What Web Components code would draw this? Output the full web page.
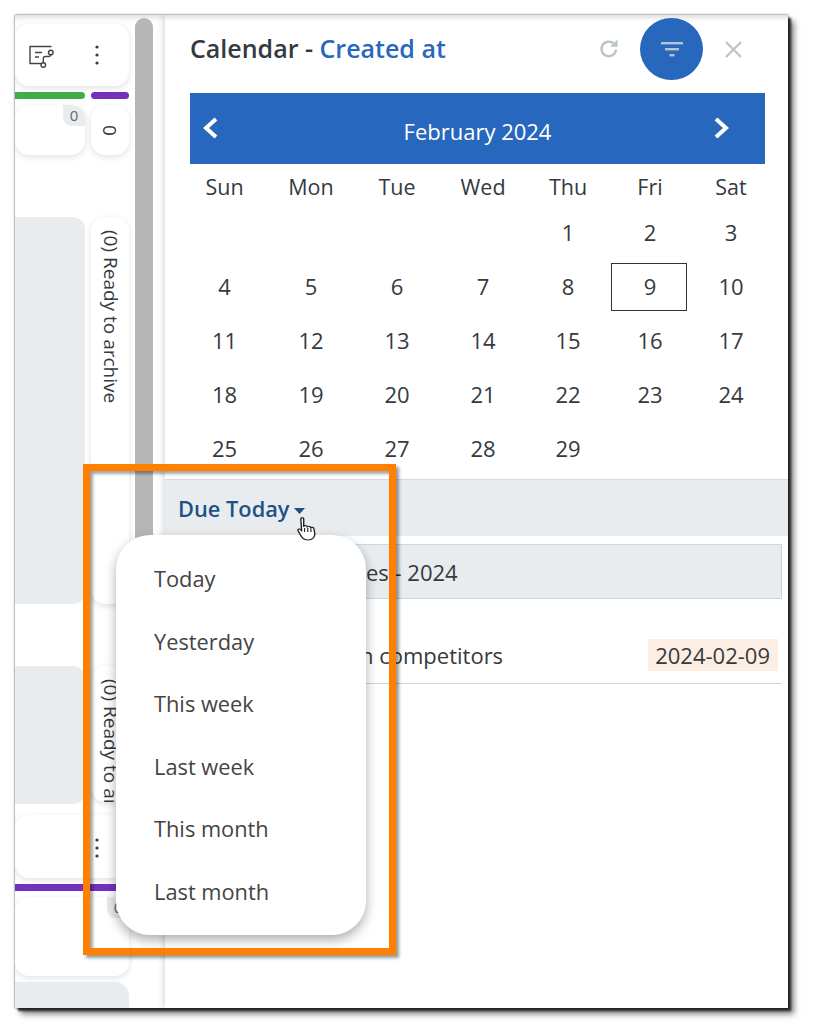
<!DOCTYPE html>
<html lang="en">
<head>
<meta charset="utf-8">
<title>Calendar</title>
<style>
html,body{margin:0;padding:0;background:#fff;}
body{width:815px;height:1035px;overflow:hidden;font-family:"Open Sans","Noto Sans",sans-serif;color:#343a40;}
</style>
</head>
<body>
<app-frame>
  <kanban-board slot="board"></kanban-board>
  <calendar-panel slot="panel">
    <calendar-month></calendar-month>
    <due-list></due-list>
  </calendar-panel>
  <filter-menu slot="over"></filter-menu>
  <highlight-box slot="over"></highlight-box>
  <hand-cursor slot="over"></hand-cursor>
</app-frame>
<script>
function comp(name, css, html){
  customElements.define(name, class extends HTMLElement{
    constructor(){
      super();
      const r=this.attachShadow({mode:'open'});
      r.innerHTML='<style>'+css+'</style>'+html;
    }
  });
}
const dots='<svg width="4" height="20" viewBox="0 0 4 20"><circle cx="2" cy="2" r="1.6" fill="#343a40"/><circle cx="2" cy="10" r="1.6" fill="#343a40"/><circle cx="2" cy="18" r="1.6" fill="#343a40"/></svg>';
const flow='<svg width="26" height="24" viewBox="0 0 26 24" fill="none" stroke="#444" stroke-width="1.4"><path d="M22.5 1.5H1V18.500H12"/><path d="M6 7.500H13M6 12H10"/><circle cx="21.800" cy="7.500" r="2.300"/><circle cx="14.300" cy="20" r="2.300"/><path d="M14.300 17.700V13.500Q14.300 11.500 16.300 11.500H19.500Q21.800 11.500 21.800 9.800"/></svg>';

comp('app-frame',`
:host{display:block;position:relative;margin:15px 0 0 15px;width:773px;height:993px;background:#fff;
  box-shadow:0 0 2px rgba(0,0,0,.75),3px 3px 2px #2e2e2e,6px 6px 6px rgba(0,0,0,.5);}
.wrap{display:flex;height:100%;overflow:hidden;box-shadow:inset 0 6px 6px -4px rgba(0,0,0,.16);}
`,`<div class="wrap"><slot name="board"></slot><slot name="panel"></slot></div><slot name="over"></slot>`);

comp('kanban-board',`
:host{display:flex;flex:none;width:148px;height:993px;overflow:hidden;font-size:19px;}
.cols{flex:none;width:114px;display:grid;grid-template-columns:70px 38px;column-gap:6px;row-gap:6px;align-content:start;padding-top:9px;}
.card{background:#fff;border-radius:14px;box-shadow:0 2px 6px rgba(0,0,0,.12);position:relative;overflow:hidden;}
.span{grid-column:1 / 3;}
.top{height:62px;}
.top .ic{position:absolute;left:14px;top:21px;display:flex;}
.top .dt{position:absolute;left:80px;top:21px;display:flex;}
.bar{height:7px;border-radius:4px;}
.g{background:#41ad49;border-radius:0 4px 4px 0;}.p{background:#7431bd;}
.small{height:50px;}
.badge{position:absolute;right:0;top:0;background:#e9ecef;color:#666;font-size:15px;line-height:20px;width:22px;height:21px;text-align:center;border-radius:0 0 0 9px;}
.rot{display:flex;align-items:center;justify-content:center;writing-mode:vertical-rl;}
.grey{background:#e9ecef;border-radius:0 12px 12px 0;}
.g1{height:387px;margin-top:56px;}
.g2{height:138px;margin-top:56px;}
.v1{margin-top:56px;height:387px;}
.v2{margin-top:56px;height:136px;align-self:start;}
.vt{writing-mode:vertical-rl;white-space:nowrap;font-size:19px;line-height:36px;padding-top:13px;width:100%;color:#343a40;}
.m3{height:63px;margin-top:5px;}
.m3 .dt{position:absolute;left:80px;top:23px;display:flex;}
.full{border-radius:0;background:#7431bd;}
.b2{height:79px;}
.b3{height:60px;background:#e9ecef;border-radius:0 14px 0 0;}
.thumb{flex:none;width:18px;height:800px;background:#b6b6b6;border-radius:9px;margin:3px 0 0 6px;}
`,`<div class="cols">
  <div class="card span top"><span class="ic">${flow}</span><span class="dt">${dots}</span></div>
  <div class="bar g"></div><div class="bar p"></div>
  <div class="card small"><span class="badge">0</span></div>
  <div class="card small rot">0</div>
  <div class="grey g1"></div>
  <div class="card v1"><div class="vt">(0) Ready to archive</div></div>
  <div class="grey g2"></div>
  <div class="card v2"><div class="vt">(0) Ready to archive</div></div>
  <div class="card span m3"><span class="dt">${dots}</span></div>
  <div class="bar full span"></div>
  <div class="card span b2"><span class="badge">0</span></div>
  <div class="span b3"></div>
</div><div class="thumb"></div>`);

comp('calendar-panel',`
:host{display:block;flex:none;width:623px;margin-left:2px;height:993px;box-shadow:-2px 0 6px rgba(0,0,0,.14);position:relative;}
.head{display:flex;align-items:center;height:62px;margin:3px 0 13px;padding:0 0 0 25px;}
h1{font:600 25px/1 "Open Sans",sans-serif;margin:0 0 2px;flex:1;color:#343a40;}
h1 span{color:#2767bd;}
.ref{display:flex;margin-right:20px;}
.fil{width:63px;height:62px;border-radius:50%;background:#2767bd;display:flex;align-items:center;justify-content:center;}
.x{display:flex;margin:0 46px 0 22px;}
`,`<div class="head"><h1>Calendar - <span>Created at</span></h1>
 <span class="ref"><svg width="22" height="22" viewBox="0 0 22 22" fill="none"><path d="M18 11.500A7.300 7.300 0 1 1 15.800 5.700" stroke="#b8c5cb" stroke-width="2.400"/><path d="M19.500 1.500V8.800H12.200Z" fill="#b8c5cb"/></svg></span>
 <span class="fil"><svg width="22" height="15" viewBox="0 0 22 15" fill="#b8c5cb"><rect x="0" y="0" width="22" height="2.400"/><rect x="4" y="6" width="14" height="2.400"/><rect x="8.500" y="12" width="5" height="2.400"/></svg></span>
 <span class="x"><svg width="17" height="17" viewBox="0 0 17 17" fill="none" stroke="#b8c5cb" stroke-width="2.200"><path d="M1 1L16 16M16 1L1 16"/></svg></span>
</div><slot></slot>`);

const cells=['','','',''];
for(let d=1;d<=29;d++)cells.push(d);
comp('calendar-month',`
:host{display:block;font-size:22px;color:#343a40;}
.bar{margin:0 23px 0 25px;height:71px;background:#2767bd;color:#fff;display:grid;grid-template-columns:1fr auto 1fr;align-items:center;padding:0 12px;font-size:22px;}
.bar span{position:relative;top:2px;}
.bar svg{display:block;position:relative;top:-1px;}
.bar svg:last-child{justify-self:end;margin-right:23px;}
.grid{display:grid;grid-template-columns:87px 86px 86px 86px 84px 80px 82px;grid-template-rows:42px;grid-auto-rows:54px;margin-left:16px;width:591px;text-align:center;line-height:52px;padding-bottom:3px;}
.wk{line-height:46px;font-size:21.500px;height:42px;}
.sel{position:relative;}
.sel::after{content:"";position:absolute;left:1px;right:3px;top:3px;bottom:3px;border:1.300px solid #333;}
`,`<div class="bar"><svg width="17" height="24" viewBox="0 0 17 24" fill="none" stroke="#fff" stroke-width="4"><path d="M14 3L4 12L14 21"/></svg><span>February 2024</span><svg width="17" height="24" viewBox="0 0 17 24" fill="none" stroke="#fff" stroke-width="4"><path d="M3 3L13 12L3 21"/></svg></div>
  <div class="grid">${['Sun','Mon','Tue','Wed','Thu','Fri','Sat'].map(d=>`<div class="wk">${d}</div>`).join('')}
  ${cells.map(d=>`<div class="${d===9?'sel':''}">${d}</div>`).join('')}</div>`);

comp('due-list',`
:host{display:block;font-size:22px;color:#343a40;}
.due{height:56px;background:#e9ecef;border-top:1px solid #d3dae0;display:flex;align-items:center;padding-left:13px;color:#1f5284;font-weight:600;font-size:21.800px;}
.due svg{margin:6px 0 0 4px;}
.grp{margin:8px 6px 0 6px;height:53px;background:#e9ecef;border:1px solid #ccd6dc;display:flex;align-items:center;padding-left:185px;}
.row{margin:0 6px 0 6px;height:85px;border-bottom:1px solid #ccd6dc;display:flex;align-items:flex-end;justify-content:space-between;padding:0 4px 12px 189px;box-sizing:border-box;}
.row .t{position:relative;top:-1px;}
.date{background:#fdeee3;line-height:32px;height:32px;padding:0 8px 0 7.500px;}
`,`<div class="due">Due Today<svg width="11" height="6" viewBox="0 0 11 6" fill="#1f5284"><path d="M0 0H11L5.500 6Z"/></svg></div>
<div class="grp">res - 2024</div>
<div class="row"><span class="t">n competitors</span><span class="date">2024-02-09</span></div>`);

comp('filter-menu',`
:host{display:block;position:absolute;left:101px;top:520px;width:250px;height:400px;background:#fff;border-radius:34px;box-shadow:0 5px 12px rgba(0,0,0,.32);
  font-size:21.800px;color:#444;padding:13px 0 0 38px;box-sizing:border-box;}
div{height:62.600px;line-height:62.600px;}
`,`<div>Today</div><div>Yesterday</div><div>This week</div><div>Last week</div><div>This month</div><div>Last month</div>`);

comp('highlight-box',`
:host{display:block;position:absolute;left:68px;top:449px;width:313px;height:491px;box-sizing:border-box;border:7px solid #ff7f00;
 box-shadow:3px 3px 3px rgba(0,0,0,.4),inset 3px 3px 3px rgba(0,0,0,.35);pointer-events:none;}
`,``);

comp('hand-cursor',`
:host{display:block;position:absolute;left:282px;top:502px;width:19px;height:24px;}
svg{display:block;}
`,`<svg width="19" height="24" viewBox="0 0 15 24" preserveAspectRatio="none" fill="#fff" stroke="#222" stroke-width="1.100" stroke-linejoin="round"><path d="M3 1.800C3 .6 5.300 .6 5.300 1.800V9.500C5.300 8.200 8 8.200 8 9.500V10C8 9 10.700 9 10.700 10.200V11C10.700 10 13.300 10.200 13.300 11.500L14 16C14.300 20 12.500 23 8.500 23C5 23 4.200 21 2.500 17.500L.8 13.500C.3 12 2.200 11.300 3 12.800L3.700 14Z"/><path d="M6 11V15M8.500 11V15M11 11.500V15" stroke-width=".9" fill="none"/></svg>`);
</script>
</body>
</html>
